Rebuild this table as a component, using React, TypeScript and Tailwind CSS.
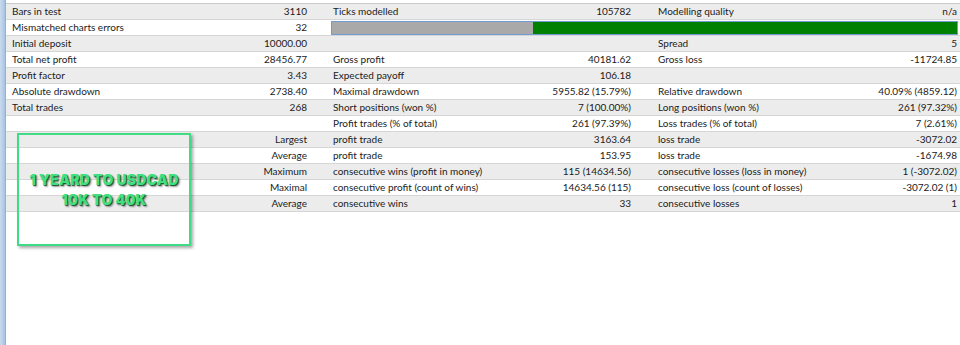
import React from 'react';

type Cell = { label?: string; value?: string };
type Row = { c1: Cell; c2: Cell; c3: Cell; bar?: boolean };

const rows: Row[] = [
  { c1: { label: 'Bars in test', value: '3110' }, c2: { label: 'Ticks modelled', value: '105782' }, c3: { label: 'Modelling quality', value: 'n/a' } },
  { c1: { label: 'Mismatched charts errors', value: '32' }, c2: {}, c3: {}, bar: true },
  { c1: { label: 'Initial deposit', value: '10000.00' }, c2: {}, c3: { label: 'Spread', value: '5' } },
  { c1: { label: 'Total net profit', value: '28456.77' }, c2: { label: 'Gross profit', value: '40181.62' }, c3: { label: 'Gross loss', value: '-11724.85' } },
  { c1: { label: 'Profit factor', value: '3.43' }, c2: { label: 'Expected payoff', value: '106.18' }, c3: {} },
  { c1: { label: 'Absolute drawdown', value: '2738.40' }, c2: { label: 'Maximal drawdown', value: '5955.82 (15.79%)' }, c3: { label: 'Relative drawdown', value: '40.09% (4859.12)' } },
  { c1: { label: 'Total trades', value: '268' }, c2: { label: 'Short positions (won %)', value: '7 (100.00%)' }, c3: { label: 'Long positions (won %)', value: '261 (97.32%)' } },
  { c1: {}, c2: { label: 'Profit trades (% of total)', value: '261 (97.39%)' }, c3: { label: 'Loss trades (% of total)', value: '7 (2.61%)' } },
  { c1: { value: 'Largest' }, c2: { label: 'profit trade', value: '3163.64' }, c3: { label: 'loss trade', value: '-3072.02' } },
  { c1: { value: 'Average' }, c2: { label: 'profit trade', value: '153.95' }, c3: { label: 'loss trade', value: '-1674.98' } },
  { c1: { value: 'Maximum' }, c2: { label: 'consecutive wins (profit in money)', value: '115 (14634.56)' }, c3: { label: 'consecutive losses (loss in money)', value: '1 (-3072.02)' } },
  { c1: { value: 'Maximal' }, c2: { label: 'consecutive profit (count of wins)', value: '14634.56 (115)' }, c3: { label: 'consecutive loss (count of losses)', value: '-3072.02 (1)' } },
  { c1: { value: 'Average' }, c2: { label: 'consecutive wins', value: '33' }, c3: { label: 'consecutive losses', value: '1' } },
];

const Block: React.FC<{ cell: Cell; className: string }> = ({ cell, className }) => (
  <div className={`flex items-center justify-between ${className}`}>
    <span>{cell.label ?? ''}</span>
    <span>{cell.value ?? ''}</span>
  </div>
);

const App: React.FC = () => {
  return (
    <div
      className="relative flex w-[960px] h-[345px] bg-white text-[10px] text-[#1b1b1b] overflow-hidden"
      style={{ fontFamily: 'Lato, "Noto Sans", sans-serif' }}
    >
      {/* Left docking strip */}
      <div className="w-[6px] h-full bg-gradient-to-r from-[#c9dbf0] to-[#a9c3e3] border-r border-[#8fb0d8]" />

      <div className="flex-1 pt-[3px]">
        <div className="border-t border-[#c8c8c8]">
          {rows.map((row, i) => (
            <div
              key={i}
              className={`flex h-[16px] leading-[15px] border-b border-[#d6d6d6] ${i % 2 === 0 ? 'bg-[#ececec]' : 'bg-white'}`}
            >
              <Block cell={row.c1} className="w-[314px] pl-[6px] pr-[13px]" />
              {row.bar ? (
                <div className="flex-1 flex items-center pl-[11px] pr-[2px]">
                  <div className="flex h-[14px] w-full border border-[#6f9bd0]">
                    <div className="w-[201px] bg-[#a9a9a9]" />
                    <div className="flex-1 bg-[#008000]" />
                  </div>
                </div>
              ) : (
                <>
                  <Block cell={row.c2} className="w-[325px] pl-[13px] pr-[14px]" />
                  <Block cell={row.c3} className="flex-1 pl-[13px] pr-[3px]" />
                </>
              )}
            </div>
          ))}
        </div>
      </div>

      {/* Annotation overlay */}
      <div className="absolute left-[17px] top-[133px] w-[174px] h-[113px] border-2 border-[#3fdc85] shadow-[2px_2px_3px_rgba(0,0,0,0.35)] flex flex-col items-center justify-center">
        <div
          className="text-[14px] leading-[20px] font-black tracking-[0.2px] text-[#3fe07f] [text-shadow:1px_1px_1px_#1b4a2e,2px_2px_2px_rgba(0,0,0,0.35)]"
          style={{ fontFamily: 'Inter, "Liberation Sans", sans-serif' }}
        >
          1 YEARD TO USDCAD
        </div>
        <div
          className="text-[14px] leading-[20px] font-black tracking-[0.2px] text-[#3fe07f] [text-shadow:1px_1px_1px_#1b4a2e,2px_2px_2px_rgba(0,0,0,0.35)]"
          style={{ fontFamily: 'Inter, "Liberation Sans", sans-serif' }}
        >
          10K TO 40K
        </div>
      </div>
    </div>
  );
};

export default App;
